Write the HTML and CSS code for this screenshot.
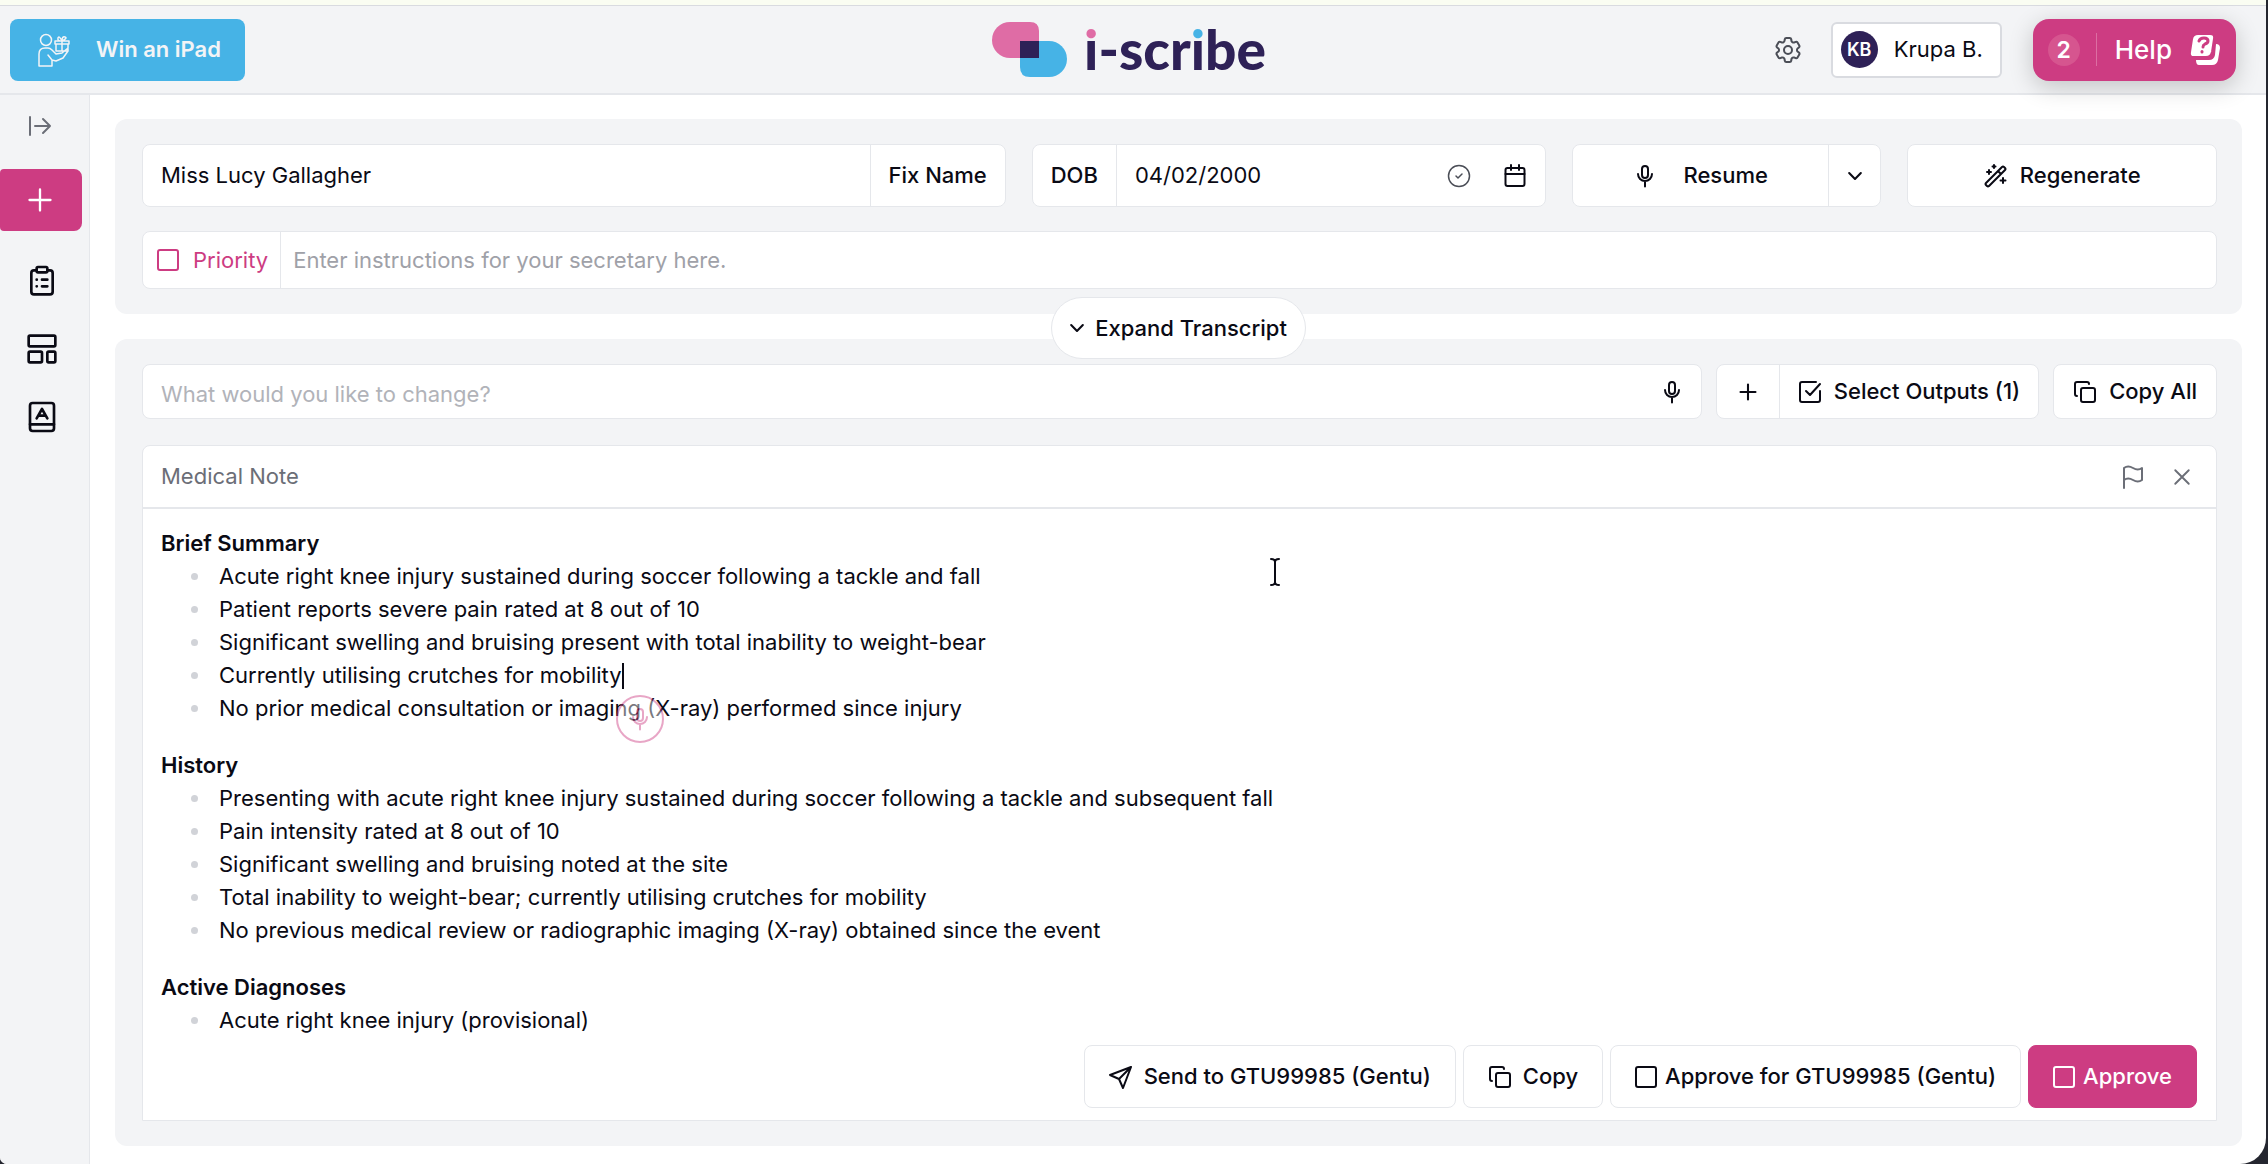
FILE: index.html
```html
<!DOCTYPE html>
<html lang="en">
<head>
  <meta charset="UTF-8" />
  <meta name="viewport" content="width=device-width, initial-scale=1.0"/>
  <title>i-scribe</title>
  <link rel="stylesheet" href="styles.css">
</head>
<body>

<!-- shared icons -->
<svg class="sprite" aria-hidden="true">
  <symbol id="i-mic" viewBox="0 0 24 24">
    <rect x="9" y="2" width="6" height="12" rx="3"/>
    <path d="M5 10a7 7 0 0 0 14 0M12 17.500v5"/>
  </symbol>
  <symbol id="i-copy" viewBox="0 0 24 24">
    <rect x="8" y="8" width="14" height="14" rx="2"/>
    <path d="M4 16a2 2 0 0 1-2-2V4a2 2 0 0 1 2-2h10a2 2 0 0 1 2 2"/>
  </symbol>
  <symbol id="i-down" viewBox="0 0 24 24"><path d="M5 8.500l7 7 7-7"/></symbol>
  <symbol id="i-plus" viewBox="0 0 24 24"><path d="M12 3v18M3 12h18"/></symbol>
</svg>

<div class="app">
  <header class="topbar">
    <button type="button" class="win-btn">
      <svg class="gift" viewBox="0 0 32 34">
        <circle cx="8" cy="7" r="5.500"/>
        <path d="M1 33V21q0-6 6-6h3q2 0 4 2l4 4 6-1 6-5M1 33h13v-6l4 1 7-3 5-7M14 27l-4-5M17 8h14v3H17zM18 11v7h12v-7M24 8v10M24 8q-5 0-4-3t4 3q0-5 3-4t-3 4"/>
      </svg>
      <span>Win an iPad</span>
    </button>

    <a href="#" class="logo" aria-label="i-scribe">
      <svg viewBox="0 0 76 56">
        <path fill="#df6ca5" d="M18 0h20q9 0 9 9v27H18A18 18 0 0 1 18 0z"/>
        <path fill="#46b3e6" d="M28 19h29a18 18 0 0 1 0 36H38q-10 0-10-10z"/>
        <path fill="#2e2157" d="M28 19h19v17H28z"/>
      </svg>
      <span class="logo-text"><span class="dot-pink">i</span>-scr<span class="dot-blue">i</span>be</span>
    </a>

    <div class="account">
      <button type="button" class="icon-btn gear" aria-label="Settings">
        <svg viewBox="0 0 24 24">
          <path d="M9.594 3.940c.09-.542.56-.94 1.110-.94h2.593c.55 0 1.020.398 1.110.94l.213 1.281c.063.374.313.686.645.87.074.04.147.083.22.127.325.196.72.257 1.075.124l1.217-.456a1.125 1.125 0 0 1 1.370.49l1.296 2.247a1.125 1.125 0 0 1-.26 1.431l-1.003.827c-.293.241-.438.613-.43.992a7.723 7.723 0 0 1 0 .255c-.008.378.137.75.43.991l1.004.827c.424.35.534.955.26 1.430l-1.298 2.247a1.125 1.125 0 0 1-1.369.491l-1.217-.456c-.355-.133-.75-.072-1.076.124a6.470 6.470 0 0 1-.22.128c-.331.183-.581.495-.644.869l-.213 1.281c-.09.543-.56.940-1.110.940h-2.594c-.55 0-1.019-.398-1.110-.94l-.213-1.281c-.062-.374-.312-.686-.644-.87a6.520 6.520 0 0 1-.22-.127c-.325-.196-.72-.257-1.076-.124l-1.217.456a1.125 1.125 0 0 1-1.369-.49l-1.297-2.247a1.125 1.125 0 0 1 .26-1.431l1.004-.827c.292-.24.437-.613.430-.991a6.932 6.932 0 0 1 0-.255c.007-.38-.138-.751-.43-.992l-1.004-.827a1.125 1.125 0 0 1-.26-1.430l1.297-2.247a1.125 1.125 0 0 1 1.370-.491l1.216.456c.356.133.751.072 1.076-.124.072-.044.146-.086.220-.128.332-.183.582-.495.644-.869z"/>
          <circle cx="12" cy="12" r="3"/>
        </svg>
      </button>
      <button type="button" class="user-btn"><span class="avatar">KB</span>Krupa B.</button>
      <button type="button" class="help-btn">
        <span class="count">2</span>
        <span class="help-label">Help</span>
        <svg viewBox="0 0 32 32">
          <path class="solid" d="M27 10q4 0 4 4l-2 12q-1 5-6 5H10q-3 0-3-5h13q5 0 6-5z"/>
          <path class="solid front" d="M9 0h12q5 0 4 5l-2 13q-1 5-6 5H5q-5 0-4-5L3 5q1-5 6-5z"/>
          <path class="mark" d="M10 7q1-3 5-3t4 3q0 2-3 3-2 1-2 3M13 17.500v.5"/>
        </svg>
      </button>
    </div>
  </header>

  <div class="body">
    <nav class="sidebar">
      <button type="button" class="icon-btn expand" aria-label="Expand menu">
        <svg viewBox="0 0 24 24"><path d="M2 3v18M7 12h15M15 5l7 7-7 7"/></svg>
      </button>
      <button type="button" class="new-btn" aria-label="New"><svg viewBox="0 0 24 24"><use href="#i-plus"/></svg></button>
      <a href="#" class="nav-link" aria-label="Notes">
        <svg viewBox="0 0 24 24"><path d="M8 4H6a2 2 0 0 0-2 2v14a2 2 0 0 0 2 2h12a2 2 0 0 0 2-2V6a2 2 0 0 0-2-2h-2"/><rect x="8" y="1.500" width="8" height="4" rx="1"/><path d="M8 11h.1M12 11h4M8 16h.1M12 16h4"/></svg>
      </a>
      <a href="#" class="nav-link" aria-label="Templates">
        <svg viewBox="0 0 24 24"><rect x="2" y="2" width="20" height="8" rx="1"/><rect x="2" y="14" width="10" height="8" rx="1"/><rect x="16" y="14" width="6" height="8" rx="1"/></svg>
      </a>
      <a href="#" class="nav-link" aria-label="Dictionary">
        <svg viewBox="0 0 24 24"><rect x="3" y="1.500" width="18" height="21" rx="2"/><path d="M3 17.500h18M8 13l4-7 4 7M9.500 11h5"/></svg>
      </a>
    </nav>

    <main class="main">
      <section class="panel">
        <div class="patient-row">
          <div class="field">
            <input type="text" aria-label="Patient name" value="Miss Lucy Gallagher">
            <button type="button" class="fix-btn">Fix Name</button>
          </div>
          <div class="field dob-field">
            <label for="dob">DOB</label>
            <input type="text" id="dob" value="04/02/2000">
            <svg class="check" viewBox="0 0 24 24"><circle cx="12" cy="12" r="10.500"/><path d="M9 12l2 2 4-4"/></svg>
            <button type="button" class="icon-btn" aria-label="Pick a date">
              <svg viewBox="0 0 24 24"><rect x="2.500" y="4" width="19" height="18" rx="2"/><path d="M2.500 10h19M8 1v5M16 1v5"/></svg>
            </button>
          </div>
          <div class="field">
            <button type="button" class="resume-btn"><svg viewBox="0 0 24 24"><use href="#i-mic"/></svg>Resume</button>
            <button type="button" class="more-btn" aria-label="More recording options"><svg viewBox="0 0 24 24"><use href="#i-down"/></svg></button>
          </div>
          <button type="button" class="field regen-btn">
            <svg viewBox="0 0 24 24"><path d="M2 19L18 3q1-1 2 0l1 1q1 1 0 2L5 22q-1 1-2 0l-1-1q-1-1 0-2zM14 7l3 3M5 6v4M3 8h4M10 1v3M8.500 2.500h3M19 14v5M16.500 16.500h5"/></svg>
            Regenerate
          </button>
        </div>
        <div class="field instructions">
          <label class="priority"><input type="checkbox" class="tick">Priority</label>
          <input type="text" aria-label="Instructions" placeholder="Enter instructions for your secretary here.">
        </div>
      </section>

      <button type="button" class="transcript-btn"><svg viewBox="0 0 24 24"><use href="#i-down"/></svg>Expand Transcript</button>

      <section class="panel outputs">
        <div class="change-row">
          <div class="field change-field">
            <input type="text" aria-label="Change request" placeholder="What would you like to change?">
            <button type="button" class="icon-btn" aria-label="Dictate"><svg viewBox="0 0 24 24"><use href="#i-mic"/></svg></button>
          </div>
          <div class="field">
            <button type="button" class="add-btn" aria-label="Add output"><svg viewBox="0 0 24 24"><use href="#i-plus"/></svg></button>
            <button type="button" class="select-btn">
              <svg viewBox="0 0 24 24"><path d="M18 2H4a2 2 0 0 0-2 2v16a2 2 0 0 0 2 2h16a2 2 0 0 0 2-2v-9M8 11l4 4L22 4"/></svg>
              Select Outputs (1)
            </button>
          </div>
          <button type="button" class="field copy-all"><svg viewBox="0 0 24 24"><use href="#i-copy"/></svg>Copy All</button>
        </div>

        <article class="note">
          <header class="note-head">
            <span>Medical Note</span>
            <button type="button" class="icon-btn" aria-label="Flag note"><svg viewBox="0 0 24 24"><path d="M3 23V3q4-3 9 0t9 0v12q-4 3-9 0t-9 0"/></svg></button>
            <button type="button" class="icon-btn close" aria-label="Close note"><svg viewBox="0 0 24 24"><path d="M3 3l18 18M21 3L3 21"/></svg></button>
          </header>
          <div class="note-body">
            <h2>Brief Summary</h2>
            <ul>
              <li>Acute right knee injury sustained during soccer following a tackle and fall</li>
              <li>Patient reports severe pain rated at 8 out of 10</li>
              <li>Significant swelling and bruising present with total inability to weight-bear</li>
              <li>Currently utilising crutches for mobility<span class="caret"><span class="dictate"><svg viewBox="0 0 24 24"><use href="#i-mic"/></svg></span></span></li>
              <li>No prior medical consultation or imaging (X-ray) performed since injury</li>
            </ul>
            <h2>History</h2>
            <ul>
              <li>Presenting with acute right knee injury sustained during soccer following a tackle and subsequent fall</li>
              <li>Pain intensity rated at 8 out of 10</li>
              <li>Significant swelling and bruising noted at the site</li>
              <li>Total inability to weight-bear; currently utilising crutches for mobility</li>
              <li>No previous medical review or radiographic imaging (X-ray) obtained since the event</li>
            </ul>
            <h2>Active Diagnoses</h2>
            <ul>
              <li>Acute right knee injury (provisional)</li>
            </ul>
            <svg class="pointer" viewBox="0 0 12 28"><path d="M2 1q4 0 4 3 0-3 4-3M6 4v20M2 27q4 0 4-3 0 3 4 3"/></svg>
          </div>
          <footer class="note-actions">
            <button type="button" class="field"><svg viewBox="0 0 24 24"><path d="M22 2L1 10l9 4 4 9zM10 14L22 2"/></svg>Send to GTU99985 (Gentu)</button>
            <button type="button" class="field"><svg viewBox="0 0 24 24"><use href="#i-copy"/></svg>Copy</button>
            <label class="field approve"><input type="checkbox" class="tick">Approve for GTU99985 (Gentu)</label>
            <label class="field approve primary"><input type="checkbox" class="tick">Approve</label>
          </footer>
        </article>
      </section>
    </main>
  </div>
</div>

</body>
</html>
```
FILE: styles.css
```css
* { box-sizing: border-box; }
html { background: #24262f; }
body { margin: 0; font: 22px/33px Inter, "Liberation Sans", sans-serif; color: #0a0a14; }
button, input { font: inherit; color: inherit; margin: 0; padding: 0; border: 0; background: none; outline: none; }
button { display: flex; align-items: center; justify-content: center; font-weight: 500; cursor: pointer; white-space: nowrap; }
svg { width: 24px; height: 24px; fill: none; stroke: currentColor; stroke-width: 2; stroke-linecap: round; stroke-linejoin: round; flex: none; }
.sprite { position: absolute; width: 0; height: 0; }

.app {
  display: flex; flex-direction: column; min-height: 100vh; margin-right: 2px;
  background: #fff; border-top: 5px solid #fafdf2; border-radius: 0 0 26px 7px; overflow: hidden;
}

/* top bar */
.topbar {
  display: grid; grid-template-columns: 1fr auto 1fr; align-items: center; height: 90px;
  padding: 0 30px 0 10px; background: #f3f4f6; border-top: 1px solid #d9dbe0; border-bottom: 2px solid #e5e7eb;
}
.win-btn { justify-self: start; height: 62px; padding: 0 24px 0 28px; gap: 26px; border-radius: 8px; background: #46b3e6; color: #f3f4f6; font-weight: 600; }
.gift { width: 32px; height: 34px; stroke-width: 1.5; }
.logo { display: flex; align-items: center; gap: 16px; padding-left: 12px; color: #2e2157; text-decoration: none; }
.logo svg { width: 76px; height: 56px; stroke: none; }
.logo-text { font: 900 55px/60px Lato, sans-serif; padding-bottom: 2px; }
.dot-pink, .dot-blue { color: transparent; -webkit-background-clip: text; background-clip: text; }
.dot-pink { background-image: linear-gradient(#df6ca5 37%, #2e2157 37%); }
.dot-blue { background-image: linear-gradient(#46b3e6 37%, #2e2157 37%); }
.account { display: flex; align-items: center; justify-content: flex-end; }
.gear { margin-right: 27px; color: #4b4e57; }
.gear svg { width: 32px; height: 32px; stroke-width: 1.5; }
.user-btn { height: 56px; padding: 0 17px 0 8px; gap: 16px; background: #fff; border: 2px solid #d9dbe0; border-radius: 6px; font-weight: 400; }
.avatar { width: 37px; height: 37px; border-radius: 50%; background: #2e2157; color: #fff; font-size: 18px; font-weight: 600; line-height: 37px; }
.help-btn {
  height: 62px; margin-left: 31px; padding: 0 15px; background: #cd3c82; color: #fff;
  border-radius: 16px; box-shadow: 0 6px 24px rgba(0, 0, 0, .2); font-size: 26px;
}
.count { width: 32px; height: 32px; border-radius: 50%; background: #d6558f; font-size: 23px; font-weight: 600; line-height: 32px; }
.help-label { margin: 0 17px 0 16px; padding-left: 18px; border-left: 1px solid #dc6ea2; }
.help-btn svg { width: 32px; height: 32px; overflow: visible; }
.help-btn .solid { fill: #fff; stroke: none; }
.help-btn .front { stroke: #cd3c82; stroke-width: 2; }
.help-btn .mark { stroke: #cd3c82; stroke-width: 3; }

/* sidebar */
.body { display: flex; flex: 1; }
.sidebar { display: flex; flex-direction: column; align-items: flex-start; width: 90px; background: #f3f4f6; border-right: 1px solid #e5e7eb; }
.expand { margin: 19px 0 31px 28px; color: #6b6e77; }
.new-btn { width: 82px; height: 62px; padding-right: 2px; border-radius: 4px 8px 8px 4px; background: #cd3c82; color: #fff; margin-bottom: 34px; }
.new-btn svg { width: 28px; height: 28px; }
.nav-link { margin: 0 0 36px 26px; color: inherit; height: 32px; }
.nav-link svg { width: 32px; height: 32px; }

/* panels */
.main { flex: 1; display: flex; flex-direction: column; min-width: 0; padding: 24px 24px 18px 25px; }
.panel { padding: 25px 25px 25px 27px; background: #f3f4f6; border-radius: 12px; }
.field { display: flex; align-items: stretch; background: #fff; border: 1px solid #e5e7eb; border-radius: 8px; }
.field > input[type=text] { flex: 1; width: 0; min-width: 0; padding: 0 18px; }
.field ::placeholder { color: #9fa1a8; opacity: 1; }
.patient-row { display: grid; grid-template-columns: 173fr 103fr 62fr 62fr; gap: 26px; height: 62px; }
.fix-btn { width: 135px; border-left: 1px solid #e5e7eb; }
.dob-field { padding-right: 18px; }
.dob-field label { padding: 14px 18px; border-right: 1px solid #e5e7eb; font-weight: 500; }
.check { align-self: center; margin-right: 32px; color: #4b4e57; stroke-width: 1.5; }
.resume-btn { flex: 1; gap: 26px; }
.more-btn { width: 52px; border-left: 1px solid #e5e7eb; }
.more-btn svg, .transcript-btn svg { width: 20px; height: 20px; stroke-width: 2.5; }
.regen-btn { align-items: center; gap: 12px; }
.instructions { height: 58px; margin-top: 25px; }
.instructions > input[type=text] { padding: 0 12px; }
.priority { display: flex; align-items: center; gap: 14px; padding: 0 12px 0 14px; border-right: 1px solid #e5e7eb; color: #cd3c82; }
.tick { appearance: none; width: 22px; height: 22px; border: 2px solid currentColor; border-radius: 3px; }
.tick:checked { background: currentColor; }
.transcript-btn {
  align-self: center; position: relative; z-index: 1; height: 62px; margin: -17px 0 -20px; padding: 0 18px 0 15px; gap: 8px;
  background: #fff; border: 1px solid #e5e7eb; border-radius: 31px;
}
.outputs { flex: 1; display: flex; flex-direction: column; }
.change-row { display: flex; gap: 14px; height: 55px; margin-bottom: 26px; }
.change-field { flex: 1; padding-right: 17px; }
.change-field > input[type=text] { padding-top: 6px; }
.change-field ::placeholder { color: #b1b3b9; }
.add-btn { width: 63px; border-right: 1px solid #e5e7eb; }
.add-btn svg { width: 20px; height: 20px; stroke-width: 2.5; }
.select-btn { padding: 0 18px; gap: 12px; }
.copy-all { padding: 0 19px; gap: 12px; align-items: center; }

/* note */
.note { flex: 1; display: flex; flex-direction: column; background: #fff; border: 1px solid #e5e7eb; border-radius: 8px 8px 0 0; }
.note-head { display: flex; align-items: center; height: 63px; padding: 0 25px 0 18px; border-bottom: 2px solid #e5e7eb; color: #6b6e77; }
.note-head span { flex: 1; }
.note-head .close { margin-left: 28px; }
.close svg { width: 18px; height: 18px; stroke-width: 2.5; }
.note-body { position: relative; flex: 1; padding: 18px 18px 8px; }
.note-body h2 { margin: 0; font: inherit; font-weight: 600; }
.note-body ul { margin: 0 0 24px; padding: 0; list-style: none; }
.note-body ul:last-of-type { margin-bottom: 0; }
.note-body li { display: flex; align-items: center; }
.note-body li::before { content: ""; width: 7px; height: 7px; margin: 0 21px 0 30px; border-radius: 50%; background: #d1d3d8; }
.caret { position: relative; width: 2px; height: 26px; background: #0a0a14; }
.dictate {
  position: absolute; left: -6px; top: 32px; z-index: 1; display: flex; align-items: center; justify-content: center;
  width: 48px; height: 48px; border: 2px solid #cd3c82; border-radius: 50%; background: #fff; color: #cd3c82; opacity: .45;
}
.pointer { position: absolute; left: 1126px; top: 49px; width: 12px; height: 28px; }
.note-actions { display: flex; justify-content: flex-end; gap: 7px; height: 75px; padding: 0 19px 12px 0; }
.note-actions .field { align-items: center; padding: 0 24px; gap: 11px; font-weight: 500; white-space: nowrap; }
.note-actions .approve { gap: 8px; }
.note-actions .primary { background: #cd3c82; border-color: #cd3c82; color: #fff; }
```
